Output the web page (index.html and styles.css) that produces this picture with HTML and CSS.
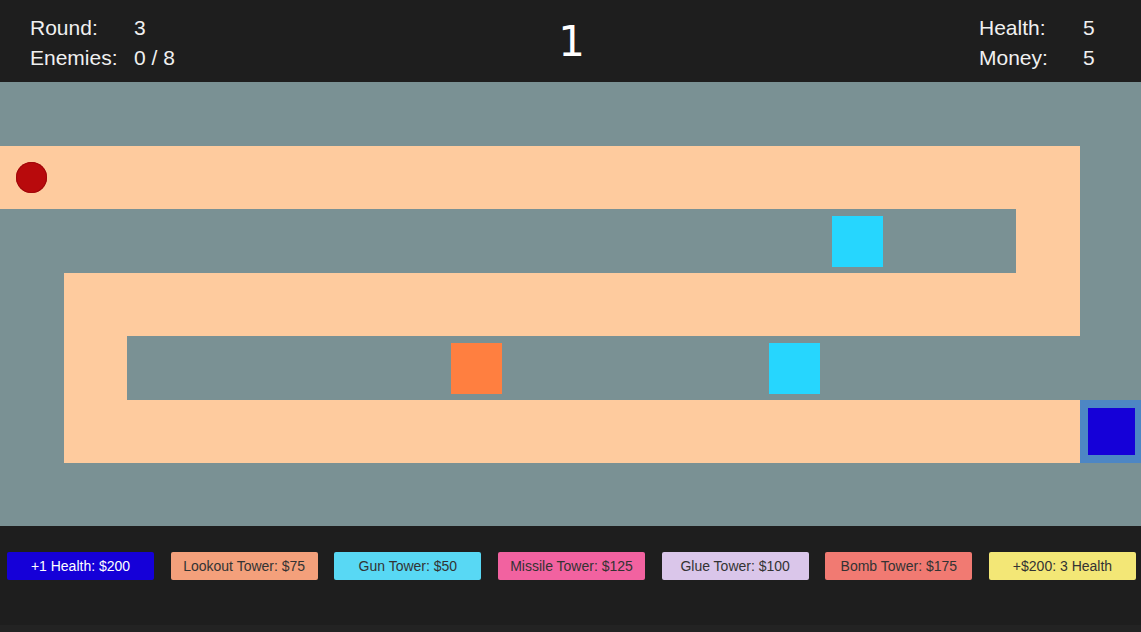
FILE: index.html
```html
<!DOCTYPE html>
<html lang="en">
<head>
<meta charset="utf-8">
<title>Tower Defense</title>
<link rel="stylesheet" href="styles.css">
</head>
<body>
<div class="app">
  <header class="hud">
    <div class="stats">
      <div class="stat"><span class="label">Round:</span><span class="value">3</span></div>
      <div class="stat"><span class="label">Enemies:</span><span class="value">0 / 8</span></div>
    </div>
    <div class="counter">1</div>
    <div class="stats stats-right">
      <div class="stat"><span class="label">Health:</span><span class="value">5</span></div>
      <div class="stat"><span class="label">Money:</span><span class="value">5</span></div>
    </div>
  </header>

  <main class="board">
    <div class="path p-row1"></div>
    <div class="path p-turn1"></div>
    <div class="path p-row3"></div>
    <div class="path p-turn2"></div>
    <div class="path p-row5"></div>
    <div class="cell-center enemy-cell"><div class="enemy"></div></div>
    <div class="tower gun t1"></div>
    <div class="tower lookout t2"></div>
    <div class="tower gun t3"></div>
    <div class="base"><div class="base-core"></div></div>
  </main>

  <footer class="shop">
    <div class="buttons">
      <button class="btn btn-health">+1 Health: $200</button>
      <button class="btn btn-lookout">Lookout Tower: $75</button>
      <button class="btn btn-gun">Gun Tower: $50</button>
      <button class="btn btn-missile">Missile Tower: $125</button>
      <button class="btn btn-glue">Glue Tower: $100</button>
      <button class="btn btn-bomb">Bomb Tower: $175</button>
      <button class="btn btn-cash">+$200: 3 Health</button>
    </div>
    <div class="shop-strip"></div>
  </footer>
</div>
</body>
</html>
```

FILE: styles.css
```css
* { box-sizing: border-box; }

html, body {
  margin: 0;
  padding: 0;
  background: #1e1e1e;
}

body {
  font-family: "Liberation Sans", Arial, sans-serif;
  width: 1141px;
  height: 632px;
  overflow: hidden;
}

.app {
  display: flex;
  flex-direction: column;
  height: 632px;
}

/* ---------- HUD ---------- */
.hud {
  height: 82px;
  background: #1e1e1e;
  color: #f0f0f0;
  display: grid;
  grid-template-columns: 1fr auto 1fr;
  align-items: start;
  padding: 13px 30px 0 30px;
}

.stats {
  display: flex;
  flex-direction: column;
  font-size: 21px;
  line-height: 30px;
}

.stats-right {
  justify-self: end;
}

.stat {
  display: flex;
}

.label {
  width: 104px;
}

.stats-right .value {
  width: 28px;
}

.counter {
  font-family: "DejaVu Sans", sans-serif;
  font-size: 42px;
  line-height: 58px;
  padding-left: 2px;
  color: #ffffff;
}

/* ---------- Board ---------- */
.board {
  height: 444px;
  overflow: hidden;
  background: #7a9194;
  display: grid;
  grid-template-columns: repeat(18, 63.5px);
  grid-template-rows: 63.5px 63.5px 63.5px 63.5px 63.5px 63.5px 63px;
}

.path { background: #fecb9e; }
.p-row1  { grid-area: 2 / 1 / 3 / 18; }
.p-turn1 { grid-area: 3 / 17 / 4 / 18; }
.p-row3  { grid-area: 4 / 2 / 5 / 18; }
.p-turn2 { grid-area: 5 / 2 / 6 / 3; }
.p-row5  { grid-area: 6 / 2 / 7 / 18; }

.cell-center {
  display: flex;
  align-items: center;
  justify-content: center;
}

.enemy-cell { grid-area: 2 / 1 / 3 / 2; }

.enemy {
  width: 31px;
  height: 31px;
  border-radius: 50%;
  background: #b80a0c;
  box-shadow: inset 0 0 0 1px #a0080a;
}

.tower {
  margin: 7px 6px 6px 6.5px;
}
.gun { background: #26d6fe; }
.lookout { background: #ff7f40; }

.t1 { grid-area: 3 / 14 / 4 / 15; }
.t2 { grid-area: 5 / 8 / 6 / 9; }
.t3 { grid-area: 5 / 13 / 6 / 14; }

.base {
  grid-area: 6 / 18 / 7 / 19;
  background: #4d86c4;
  padding: 8px;
  display: flex;
}

.base-core {
  flex: 1;
  background: #1500d8;
}

/* ---------- Shop ---------- */
.shop {
  flex: 1;
  background: #1e1e1e;
  display: flex;
  flex-direction: column;
}

.buttons {
  display: grid;
  grid-template-columns: repeat(7, 1fr);
  column-gap: 16.67px;
  padding: 26px 5px 0 7px;
  flex: 1;
  align-items: start;
}

.btn {
  height: 28px;
  border: none;
  border-radius: 2px;
  font-family: "Liberation Sans", Arial, sans-serif;
  font-size: 14px;
  color: #333333;
  padding: 0;
  cursor: pointer;
}

.btn-health  { background: #1500d8; color: #ffffff; }
.btn-lookout { background: #f4a07b; }
.btn-gun     { background: #58d8f4; }
.btn-missile { background: #f262a0; }
.btn-glue    { background: #dac6ea; }
.btn-bomb    { background: #f17a72; }
.btn-cash    { background: #f3e776; }

.shop-strip {
  height: 7px;
  background: #232323;
}
```
